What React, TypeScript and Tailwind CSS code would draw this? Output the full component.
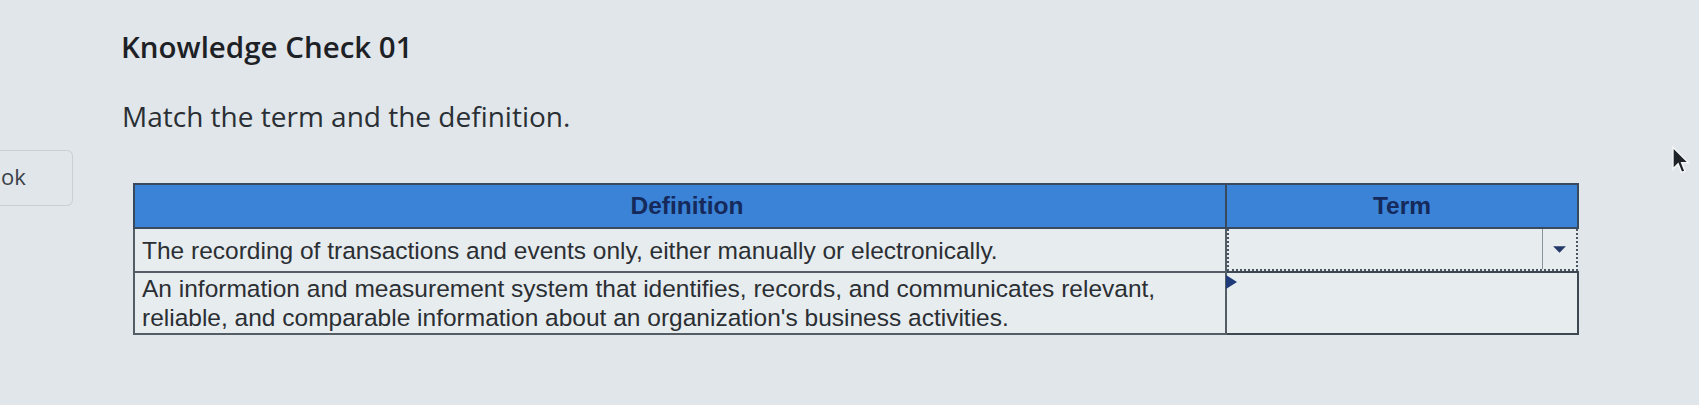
import React from 'react';

const rows = [
  {
    text: 'The recording of transactions and events only, either manually or electronically.',
    active: true,
  },
  {
    text: "An information and measurement system that identifies, records, and communicates relevant, reliable, and comparable information about an organization's business activities.",
    active: false,
  },
];

function Cursor() {
  return (
    <svg className="absolute left-[1670px] top-[146px]" width="22" height="30" viewBox="0 0 18 26">
      <path d="M2 1 L2 20 L6.5 15.5 L9.5 23 L12.5 21.8 L9.6 14.6 L15.5 14.6 Z" fill="#1f2428" stroke="#f4f6f7" strokeWidth="1.3" />
    </svg>
  );
}

function TermSelect() {
  return (
    <div className="flex h-[42px] border-2 border-dotted border-[#4a5560] border-t-0">
      <div className="flex-1" />
      <div className="w-[34px] border-l border-[#8a949c] flex items-center justify-center">
        <svg width="15" height="9" viewBox="0 0 14 8">
          <path d="M1 1 L13 1 L7 7 Z" fill="#23396a" />
        </svg>
      </div>
    </div>
  );
}

function EmptyTerm() {
  return (
    <div className="relative h-[60px]">
      <svg className="absolute left-[-1px] top-[2px]" width="12" height="16" viewBox="0 0 12 16">
        <path d="M0 0 L11 7 L0 14 Z" fill="#1e3a78" />
      </svg>
    </div>
  );
}

export default function App() {
  return (
    <div className="relative w-[1699px] h-[405px] overflow-hidden bg-[#e0e6ea] font-['Liberation_Sans',Arial,sans-serif]">
      <div className="flex">
        <div className="w-[121px] pt-[150px]">
          <div className="w-[73px] h-[56px] border border-l-0 border-[#c9d0d5] rounded-r-md flex items-center">
            <span className="text-[22px] text-[#3a4148] font-['Open_Sans',sans-serif] ml-[1px] mt-[-4px]">ok</span>
          </div>
        </div>

        <div className="flex-1 pt-[29px]">
          <h1 className="text-[29.5px] leading-[35px] font-semibold text-[#1d2125] font-['Open_Sans',sans-serif]">
            Knowledge Check 01
          </h1>
          <p className="mt-[35px] text-[28px] leading-[34px] text-[#2a2f34] font-['Open_Sans',sans-serif] ml-[1px]">
            Match the term and the definition.
          </p>

          <table className="mt-[50px] ml-[12px] w-[1446px] border-collapse text-[24.5px] text-[#2b2f33]">
            <thead>
              <tr className="h-[44px] bg-[#3a83d6]">
                <th className="w-[1092px] border-2 border-[#3a4a5e] pl-[14px] text-[24.5px] font-bold text-[#15295a] text-center">Definition</th>
                <th className="border-2 border-[#3a4a5e] text-[24.5px] font-bold text-[#15295a] text-center">Term</th>
              </tr>
            </thead>
            <tbody>
              {rows.map((r, i) => (
                <tr key={i} className="bg-[#e7ecef]">
                  <td className="border-2 border-[#545d66] px-[7px] py-0 leading-[29px] align-middle">
                    <div className={i === 0 ? 'h-[41px] flex items-center' : 'h-[59px] flex flex-col justify-center'}>
                      {r.text}
                    </div>
                  </td>
                  <td className={r.active ? 'p-0 align-top' : 'p-0 align-top border-2 border-[#3e4852]'}>
                    {r.active ? <TermSelect /> : <EmptyTerm />}
                  </td>
                </tr>
              ))}
            </tbody>
          </table>
        </div>
      </div>
      <Cursor />
    </div>
  );
}
